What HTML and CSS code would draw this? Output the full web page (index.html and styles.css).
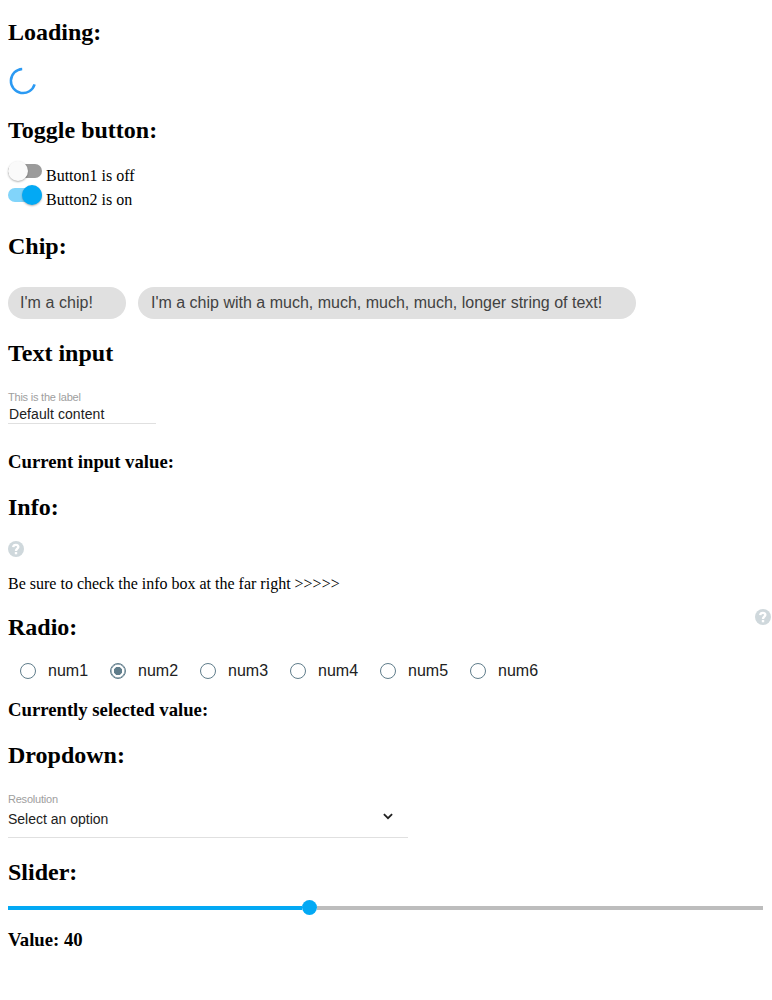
FILE: index.html
```html
<!DOCTYPE html>
<html lang="en">
<head>
<meta charset="utf-8">
<title>Components</title>
<link rel="stylesheet" href="styles.css">
</head>
<body>
<section class="loading">
  <h2>Loading:</h2>
  <svg class="spinner" width="28" height="28" viewBox="0 0 28 28"><path d="M13.2 1.9A12.1 12.1 0 1 0 25.6 17.4" fill="none" stroke="#2b9af3" stroke-width="2.5"/></svg>
</section>
<section class="toggles">
  <h2>Toggle button:</h2>
  <div class="toggle-row"><span class="toggle"><span class="knob"></span></span><span>Button1 is off</span></div>
  <div class="toggle-row"><span class="toggle on"><span class="knob"></span></span><span>Button2 is on</span></div>
</section>
<section class="chip-section">
  <h2>Chip:</h2>
  <div class="chips"><span class="chip short">I'm a chip!</span><span class="chip long">I'm a chip with a much, much, much, much, longer string of text!</span></div>
</section>
<section class="input-section">
  <h2>Text input</h2>
  <div class="field"><div class="label input-label">This is the label</div><div class="input">Default content</div></div>
  <h3 class="input-value">Current input value:</h3>
</section>
<section class="info-section">
  <h2>Info:</h2>
  <svg class="info" width="16" height="16" viewBox="0 0 16 16"><circle cx="8" cy="8" r="8" fill="#cfd8dc"/><path d="M5.2 6.1C5.5 3 10.5 3.2 10.3 6C10.2 7.7 8 7.6 8 9.9" fill="none" stroke="#fff" stroke-width="2.4"/><path d="M6.8 11h2.4v2.3H6.8z" fill="#fff"/></svg>
  <p class="note">Be sure to check the info box at the far right &gt;&gt;&gt;&gt;&gt;</p>
</section>
<section class="radio-section">
  <div class="radio-head"><h2>Radio:</h2>
  <svg class="info-right" width="16" height="16" viewBox="0 0 16 16"><circle cx="8" cy="8" r="8" fill="#cfd8dc"/><path d="M5.2 6.1C5.5 3 10.5 3.2 10.3 6C10.2 7.7 8 7.6 8 9.9" fill="none" stroke="#fff" stroke-width="2.4"/><path d="M6.8 11h2.4v2.3H6.8z" fill="#fff"/></svg></div>
  <div class="radios">
    <span class="radio"><i class="dot"></i>num1</span>
    <span class="radio"><i class="dot checked"></i>num2</span>
    <span class="radio"><i class="dot"></i>num3</span>
    <span class="radio"><i class="dot"></i>num4</span>
    <span class="radio"><i class="dot"></i>num5</span>
    <span class="radio"><i class="dot"></i>num6</span>
  </div>
  <h3 class="radio-value">Currently selected value:</h3>
</section>
<section class="dropdown-section">
  <h2>Dropdown:</h2>
  <div class="dropdown">
    <div class="label dropdown-label">Resolution</div>
    <div class="select"><span class="select-text">Select an option</span><svg width="10" height="7" viewBox="0 0 10 7"><path d="M.9 1.1L5 5.2L9.1 1.1" fill="none" stroke="#212121" stroke-width="1.8"/></svg></div>
  </div>
</section>
<section class="slider-section">
  <h2>Slider:</h2>
  <div class="slider"><span class="fill"></span><span class="thumb"></span><span class="rest"></span></div>
  <h3 class="slider-value">Value: 40</h3>
</section>
</body>
</html>
```
FILE: styles.css
```css
* { box-sizing: border-box; }
body {
  margin: 0;
  padding: 18px 0 0 8px;
  height: 1000px;
  overflow: hidden;
  background: #fff;
  color: #000;
  font: 16px/18px "Liberation Serif", serif;
}
h2, h3 { margin: 0; white-space: nowrap; }
h2 { font-size: 24px; line-height: 28px; }
h3 { font-size: 18.72px; line-height: 21px; }
svg { display: block; }

.loading { height: 98px; }
.spinner { margin: 21px 0 0 1px; }

.toggles { height: 116px; }
.toggles h2 { margin-bottom: 17px; }
.toggle-row { display: flex; gap: 4px; height: 24px; line-height: 30px; }
.toggle {
  display: flex;
  align-items: center;
  width: 34px;
  height: 14px;
  margin-top: 3px;
  border-radius: 7px;
  background: #9b9b9b;
}
.knob {
  width: 20px;
  height: 20px;
  border-radius: 50%;
  background: #fafafa;
  box-shadow: 0 1px 2px rgba(0, 0, 0, .3);
}
.toggle.on { justify-content: flex-end; background: #81d4fa; }
.on .knob { background: #03a9f4; }

.chip-section { height: 107px; }
.chips { display: flex; gap: 12px; margin-top: 27px; }
.chip {
  height: 32px;
  padding-left: 12px;
  border-radius: 16px;
  background: #e0e0e0;
  color: #424242;
  font: 16px/31px "Liberation Sans", sans-serif;
  white-space: nowrap;
}
.short { width: 118px; letter-spacing: .05px; }
.long { width: 498px; padding-left: 13px; }

.input-section { height: 154px; }
.field {
  width: 148px;
  height: 34px;
  margin-top: 23px;
  border-bottom: 1px solid #e0e0e0;
  font-family: "Liberation Sans", sans-serif;
}
.label { color: #9e9e9e; font-size: 11px; line-height: 14px; letter-spacing: -.22px; }
.input { padding-left: 1px; color: #212121; font-size: 14px; line-height: 20px; letter-spacing: .08px; }
.input-value { margin-top: 27px; }

.info-section { height: 120px; }
.info { margin-top: 20px; }
.note { margin: 18px 0 0; }

.radio-section { height: 128px; }
.radio-head { display: flex; justify-content: space-between; height: 28px; padding-right: 1px; }
.info-right { margin-top: -4px; }
.radios { display: flex; margin: 20px 0 0 12px; }
.radio {
  display: flex;
  align-items: center;
  gap: 12px;
  width: 90px;
  height: 20px;
  color: #212121;
  font: 16px/20px "Liberation Sans", sans-serif;
}
.dot {
  width: 16px;
  height: 16px;
  border: 1px solid #607d8b;
  border-radius: 50%;
}
.checked {
  background: radial-gradient(circle, #607d8b 3.8px, transparent 4.5px);
  box-shadow: inset 0 0 0 .5px #607d8b;
}
.radio-value { margin-top: 18px; }

.dropdown-section { height: 117px; }
.dropdown {
  width: 400px;
  height: 46px;
  margin-top: 23px;
  border-bottom: 1px solid #e0e0e0;
  font-family: "Liberation Sans", sans-serif;
}
.select {
  display: flex;
  justify-content: space-between;
  padding-right: 15px;
  color: #212121;
  font-size: 14px;
  line-height: 26px;
}
.select svg { margin-top: 7px; }

.slider { display: flex; align-items: center; width: 755px; height: 16px; margin-top: 14px; }
.fill { width: 294px; height: 4px; background: #03a9f4; }
.thumb { width: 15px; height: 15px; margin-bottom: 1px; border-radius: 50%; background: #03a9f4; }
.rest { flex: 1; height: 4px; background: #bdbdbd; }
.slider-value { margin-top: 13px; }
```
